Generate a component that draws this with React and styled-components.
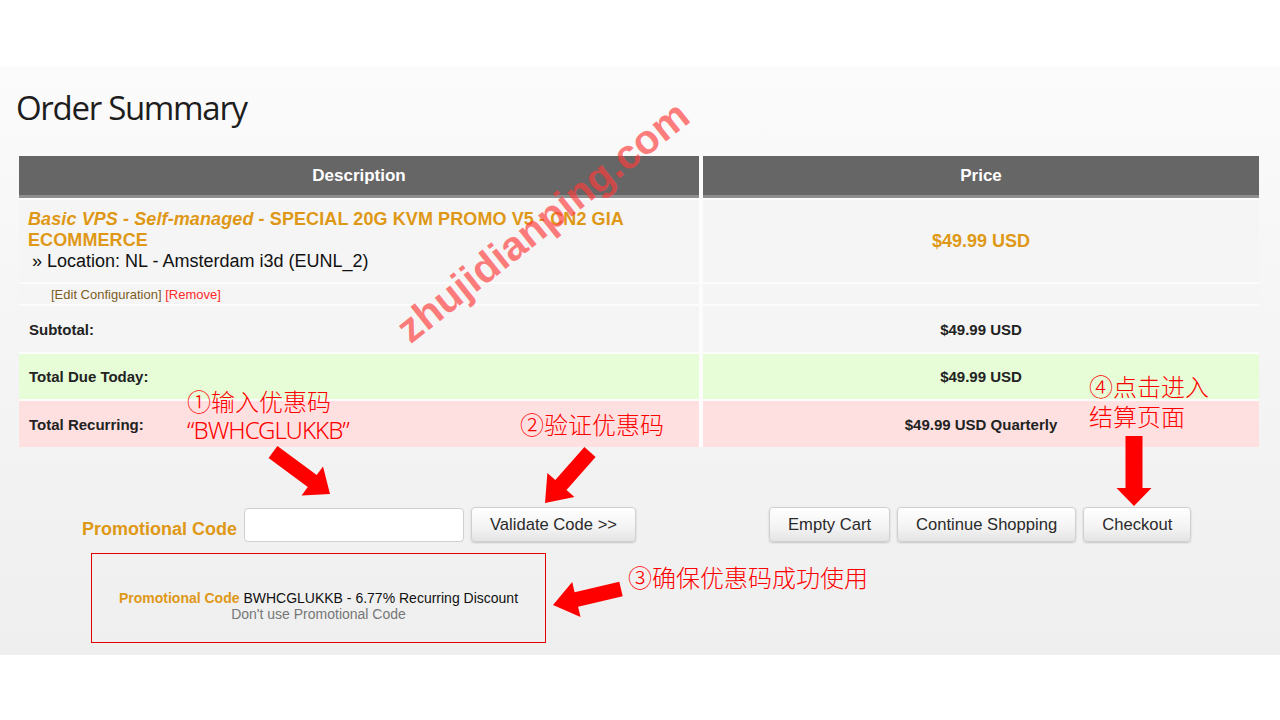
import React from 'react';
import styled, { createGlobalStyle } from 'styled-components';

const GlobalStyle = createGlobalStyle`
  html, body {
    margin: 0;
    padding: 0;
    background: #fff;
  }
  body {
    font-family: "Liberation Sans", Arial, sans-serif;
  }
`;

const ORANGE = '#df9816';

const Page = styled.div`
  position: relative;
  width: 1280px;
  height: 720px;
  padding-top: 66px;
  box-sizing: border-box;
  overflow: hidden;
`;

const Panel = styled.section`
  background: linear-gradient(to bottom, #fbfbfb 0%, #f5f5f5 45%, #efefef 100%);
  padding: 22px 21px 12px 19px;
`;

const Title = styled.h1`
  margin: 0 0 28px -3px;
  font-family: "Open Sans", "Noto Sans", sans-serif;
  font-weight: 400;
  font-size: 33px;
  line-height: 40px;
  letter-spacing: -1.3px;
  color: #1d1d1d;
`;

const Table = styled.div`
  display: grid;
  grid-template-columns: 680px 1fr;
  column-gap: 4px;
  row-gap: 2px;
  background: #fcfcfc;
`;

const HeadCell = styled.div`
  height: 42px;
  box-sizing: border-box;
  background: #666;
  border-bottom: 3px solid #8e8e8e;
  color: #fff;
  font-weight: bold;
  font-size: 17px;
  display: flex;
  align-items: center;
  justify-content: center;
`;

const tones = {
  plain: '#f5f5f5',
  green: '#e6fdd7',
  pink: '#ffe0e0',
};

const Cell = styled.div`
  background: ${p => tones[p.$tone || 'plain']};
  box-sizing: border-box;
`;

const ProductCell = styled(Cell)`
  padding: 9px 9px 10px 9px;
  font-size: 18px;
  line-height: 21px;
`;

const ProductTitle = styled.div`
  color: ${ORANGE};
  font-weight: bold;
  letter-spacing: 0.1px;

  em {
    font-style: italic;
  }
`;

const Location = styled.div`
  color: #111;
  padding-left: 4px;
`;

const PriceCell = styled(Cell)`
  display: flex;
  align-items: center;
  justify-content: center;
  color: ${ORANGE};
  font-weight: bold;
  font-size: 18px;
`;

const EditCell = styled(Cell)`
  height: 20px;
  padding-left: 32px;
  font-size: 13px;
  line-height: 22px;
`;

const EditLink = styled.span`
  color: ${p => (p.$danger ? '#ff2a2a' : '#7d5d1f')};
`;

const SumCell = styled(Cell)`
  height: ${p => p.$h}px;
  display: flex;
  align-items: center;
  justify-content: ${p => (p.$center ? 'center' : 'flex-start')};
  padding-left: ${p => (p.$center ? 0 : 10)}px;
  font-weight: bold;
  font-size: 15px;
  color: #222;
`;

const Actions = styled.div`
  display: flex;
  align-items: center;
  margin-top: 60px;
  padding-left: 63px;
`;

const PromoLabel = styled.label`
  color: ${ORANGE};
  font-weight: bold;
  font-size: 18px;
  margin-right: 7px;
  padding-top: 9px;
`;

const PromoInput = styled.input`
  width: 220px;
  height: 34px;
  box-sizing: border-box;
  border: 1px solid #cfcfcf;
  border-radius: 4px;
  background: #fff;
  margin: 0 7px 0 0;
`;

const Button = styled.button`
  height: 35px;
  padding: 0 18px;
  font-family: "Liberation Sans", Arial, sans-serif;
  font-size: 16.6px;
  color: #2a2a2a;
  background: linear-gradient(to bottom, #ffffff 0%, #f3f3f3 60%, #e4e4e4 100%);
  border: 1px solid #d0d0d0;
  border-radius: 4px;
  box-shadow: 0 1px 2px rgba(0, 0, 0, 0.18);
  cursor: pointer;
`;

const CartButtons = styled.div`
  display: flex;
  gap: 7px;
  margin-left: 133px;
`;

const PromoBox = styled.div`
  margin: 11px 0 0 72px;
  width: 455px;
  height: 90px;
  box-sizing: border-box;
  border: 1px solid #e40000;
  padding-top: 36px;
  text-align: center;
  font-size: 14px;
  line-height: 16px;
  color: #111;
`;

const PromoName = styled.span`
  color: ${ORANGE};
  font-weight: bold;
`;

const RemovePromo = styled.div`
  color: #777;
`;

const Note = styled.div`
  position: absolute;
  left: ${p => p.$x}px;
  top: ${p => p.$y}px;
  color: #ff0000;
  font-family: "Noto Sans CJK SC", "Noto Sans", sans-serif;
  font-weight: 300;
  font-size: 24px;
  line-height: ${p => p.$lh || 30}px;
  white-space: nowrap;
`;

const LatinLine = styled.span`
  font-family: "Noto Sans", sans-serif;
  font-weight: 300;
  letter-spacing: -1px;
`;

const Watermark = styled.div`
  position: absolute;
  left: 543px;
  top: 222px;
  transform: translate(-50%, -50%) rotate(-38.5deg);
  font-family: "Liberation Sans", Arial, sans-serif;
  font-weight: bold;
  font-size: 41px;
  color: rgba(255, 60, 60, 0.66);
  white-space: nowrap;
  pointer-events: none;
`;

const ArrowLayer = styled.svg`
  position: absolute;
  left: 0;
  top: 0;
  pointer-events: none;
`;

function arrowPoints([x1, y1], [x2, y2], shaft, head, headLen) {
  const dx = x2 - x1;
  const dy = y2 - y1;
  const len = Math.hypot(dx, dy);
  const ux = dx / len;
  const uy = dy / len;
  const nx = -uy;
  const ny = ux;
  const bx = x2 - ux * headLen;
  const by = y2 - uy * headLen;
  const s = shaft / 2;
  const h = head / 2;
  return [
    [x1 + nx * s, y1 + ny * s],
    [bx + nx * s, by + ny * s],
    [bx + nx * h, by + ny * h],
    [x2, y2],
    [bx - nx * h, by - ny * h],
    [bx - nx * s, by - ny * s],
    [x1 - nx * s, y1 - ny * s],
  ]
    .map(([x, y]) => `${x.toFixed(1)},${y.toFixed(1)}`)
    .join(' ');
}

const arrows = [
  { from: [273, 452], to: [330, 494], shaft: 15, head: 36, headLen: 22 },
  { from: [590, 452], to: [545, 503], shaft: 15, head: 36, headLen: 24 },
  { from: [621, 589], to: [553, 605], shaft: 15, head: 36, headLen: 24 },
  { from: [1134, 436], to: [1134, 506], shaft: 17, head: 35, headLen: 18 },
];

export default function App() {
  return (
    <>
      <GlobalStyle />
      <Page>
        <Panel>
          <Title>Order Summary</Title>

          <Table>
            <HeadCell>Description</HeadCell>
            <HeadCell>Price</HeadCell>

            <ProductCell>
              <ProductTitle>
                <em>Basic VPS - Self-managed</em> - SPECIAL 20G KVM PROMO V5 - CN2 GIA ECOMMERCE
              </ProductTitle>
              <Location>» Location: NL - Amsterdam i3d (EUNL_2)</Location>
            </ProductCell>
            <PriceCell>$49.99 USD</PriceCell>

            <EditCell>
              <EditLink>[Edit Configuration]</EditLink> <EditLink $danger>[Remove]</EditLink>
            </EditCell>
            <Cell />

            <SumCell $h={46}>Subtotal:</SumCell>
            <SumCell $h={46} $center>$49.99 USD</SumCell>

            <SumCell $h={45} $tone="green">Total Due Today:</SumCell>
            <SumCell $h={45} $tone="green" $center>$49.99 USD</SumCell>

            <SumCell $h={46} $tone="pink">Total Recurring:</SumCell>
            <SumCell $h={46} $tone="pink" $center>$49.99 USD Quarterly</SumCell>
          </Table>

          <Actions>
            <PromoLabel>Promotional Code</PromoLabel>
            <PromoInput type="text" />
            <Button>Validate Code &gt;&gt;</Button>
            <CartButtons>
              <Button>Empty Cart</Button>
              <Button>Continue Shopping</Button>
              <Button>Checkout</Button>
            </CartButtons>
          </Actions>

          <PromoBox>
            <div>
              <PromoName>Promotional Code</PromoName> BWHCGLUKKB - 6.77% Recurring Discount
            </div>
            <RemovePromo>Don't use Promotional Code</RemovePromo>
          </PromoBox>
        </Panel>

        <Watermark>zhujidianping.com</Watermark>

        <ArrowLayer width="1280" height="720" viewBox="0 0 1280 720">
          {arrows.map((a, i) => (
            <polygon key={i} points={arrowPoints(a.from, a.to, a.shaft, a.head, a.headLen)} fill="#ff0000" />
          ))}
        </ArrowLayer>

        <Note $x={187} $y={387} $lh={28}>
          ①输入优惠码
          <br />
          <LatinLine>“BWHCGLUKKB”</LatinLine>
        </Note>
        <Note $x={520} $y={409}>②验证优惠码</Note>
        <Note $x={628} $y={562}>③确保优惠码成功使用</Note>
        <Note $x={1089} $y={371}>
          ④点击进入
          <br />
          结算页面
        </Note>
      </Page>
    </>
  );
}
